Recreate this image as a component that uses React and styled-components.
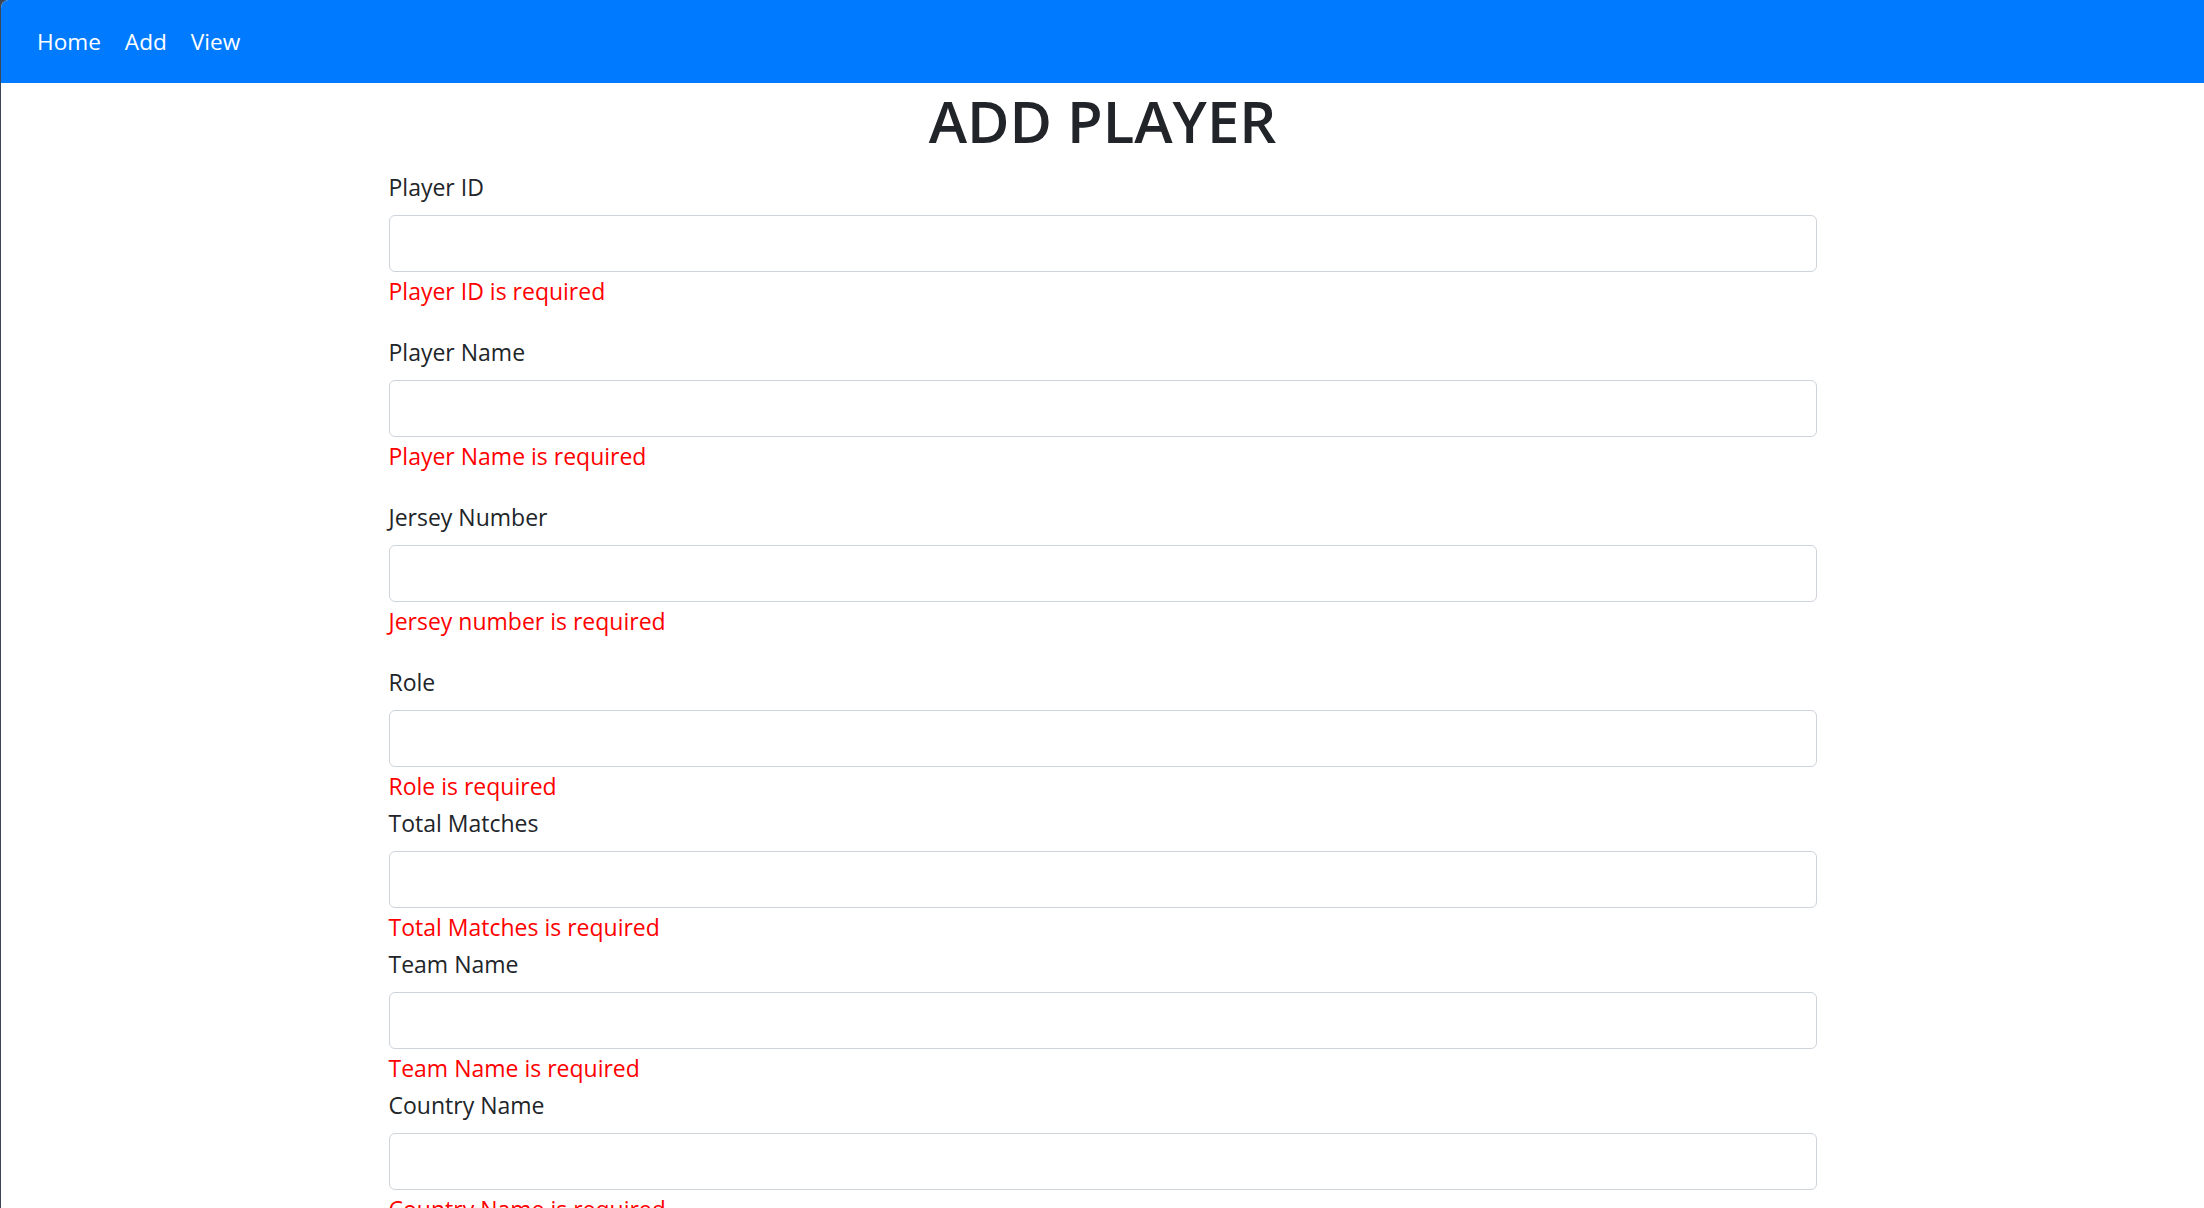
import React from 'react';
import styled, { createGlobalStyle } from 'styled-components';

const GlobalStyle = createGlobalStyle`
  html, body {
    margin: 0;
    padding: 0;
    background: #3b4756;
  }

  body {
    font-family: "Open Sans", "Noto Sans", sans-serif;
    font-size: 23px;
    line-height: 1.5;
    color: #212529;
  }

  * {
    box-sizing: border-box;
  }
`;

const Page = styled.div`
  margin-left: 1px;
  min-height: 100vh;
  background: #fff;
  border-top-left-radius: 8px;
  overflow: hidden;
`;

const Navbar = styled.nav`
  display: flex;
  align-items: center;
  height: 83px;
  padding: 0 24px;
  background: #007bff;
`;

const NavLink = styled.a`
  padding: 12px;
  color: #fff;
  font-size: 22.6px;
  line-height: 36px;
  text-decoration: none;
  cursor: pointer;
`;

const Title = styled.h1`
  margin: 0 0 12px;
  padding-top: 3px;
  font-size: 58px;
  font-weight: 600;
  line-height: 69px;
  text-align: center;
  color: #212529;
`;

const Form = styled.form`
  width: 1428px;
  margin: 0 auto;
`;

const Group = styled.div`
  margin-bottom: ${props => (props.$spaced ? '24px' : '0')};
`;

const Label = styled.label`
  display: block;
  margin-bottom: 10px;
  padding-top: 2px;
  line-height: 36px;
`;

const Input = styled.input`
  display: block;
  width: 100%;
  height: 57px;
  padding: 9px 18px;
  font-family: inherit;
  font-size: 23px;
  color: #495057;
  background: #fff;
  border: 1.5px solid #ced4da;
  border-radius: 6px;
  outline: none;
`;

const Error = styled.div`
  padding-top: 2px;
  color: #ff0000;
  line-height: 34px;
`;

// form fields and the validation messages shown under them
const fields = [
  { label: 'Player ID', error: 'Player ID is required', spaced: true },
  { label: 'Player Name', error: 'Player Name is required', spaced: true },
  { label: 'Jersey Number', error: 'Jersey number is required', spaced: true },
  { label: 'Role', error: 'Role is required', spaced: false },
  { label: 'Total Matches', error: 'Total Matches is required', spaced: false },
  { label: 'Team Name', error: 'Team Name is required', spaced: false },
  { label: 'Country Name', error: 'Country Name is required', spaced: false },
];

const App = () => (
  <>
    <GlobalStyle />
    <Page>
      <Navbar>
        <NavLink>Home</NavLink>
        <NavLink>Add</NavLink>
        <NavLink>View</NavLink>
      </Navbar>

      <Title>ADD PLAYER</Title>

      <Form onSubmit={e => e.preventDefault()}>
        {fields.map((field, i) => (
          <Group key={i} $spaced={field.spaced}>
            <Label htmlFor={`field-${i}`}>{field.label}</Label>
            <Input id={`field-${i}`} type="text" />
            <Error>{field.error}</Error>
          </Group>
        ))}
      </Form>
    </Page>
  </>
);

export default App;
